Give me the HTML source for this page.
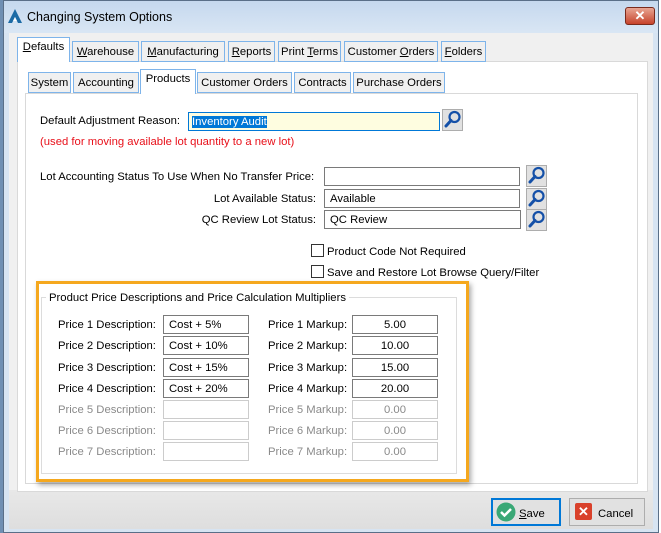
<!DOCTYPE html>
<html><head><style>
*{box-sizing:border-box;margin:0;padding:0}
body{width:661px;height:533px;overflow:hidden;background:#fff;font-family:"Liberation Sans",sans-serif;font-size:11.3px;color:#000;position:relative}
.a{position:absolute}
.tab{position:absolute;border:1px solid #7eb4ea;background:#f0f0f0;height:21px;line-height:20px;text-align:center;font-size:11.3px;white-space:nowrap;overflow:hidden}
.tab.sel{background:#fff;border-color:#7eb4ea;border-bottom:none;height:25px;line-height:19px}
.in{position:absolute;border:1px solid #7a7a7a;background:#fff;height:19px;line-height:18px;padding-left:5px;font-size:11.3px;white-space:nowrap}
.dis{border-color:#ccc;color:#8a8a8a}
.btn{position:absolute;width:21px;height:22px;background:#e1e1e1;border:1px solid #adadad}
.lbl{position:absolute;font-size:11.3px;line-height:14px;white-space:nowrap}
.g{color:#8a8a8a}
.cb{position:absolute;width:13px;height:13px;border:1px solid #333;background:#fff}
u{text-decoration:underline}
</style></head><body>
<div class="a" style="left:0;top:0;width:4px;height:533px;background:#6f8fb3"></div>
<div class="a" style="left:3px;top:0;width:656px;height:533px;background:#d7e4f2;border:1px solid #5a6f88"></div>
<div class="a" style="left:4px;top:1px;width:654px;height:32px;background:linear-gradient(#c5d8ee,#d9e6f4)"></div>
<svg class="a" style="left:7px;top:8px" width="16" height="16" viewBox="0 0 16 16"><path d="M8 1L1 15h4l3-6 3 6h4z" fill="#1b6aa5"/><path d="M8 9l-2 4h4z" fill="#fff"/></svg>
<div class="lbl" style="left:27px;top:10px;font-size:12.5px">Changing System Options</div>
<div class="a" style="left:625px;top:7px;width:30px;height:18px;background:linear-gradient(#e8a593,#c7432b);border:1px solid #7a2a1c;border-radius:3px;color:#fff;text-align:center;font-weight:bold;line-height:15px;font-size:13px">✕</div>
<div class="a" style="left:9px;top:33px;width:644px;height:496px;background:#f0f0f0"></div>
<div class="a" style="left:9px;top:490px;width:644px;height:39px;background:linear-gradient(#e8e8e8,#dedede)"></div>
<div class="a" style="left:17px;top:61px;width:631px;height:431px;background:#fff;border:1px solid #d9d9d9"></div>
<div class="tab sel" style="left:17px;top:37px;width:53px"><u>D</u>efaults</div>
<div class="tab" style="left:72px;top:41px;width:67px"><u>W</u>arehouse</div>
<div class="tab" style="left:141px;top:41px;width:84px"><u>M</u>anufacturing</div>
<div class="tab" style="left:228px;top:41px;width:47px"><u>R</u>eports</div>
<div class="tab" style="left:278px;top:41px;width:63px">Print <u>T</u>erms</div>
<div class="tab" style="left:344px;top:41px;width:94px">Customer <u>O</u>rders</div>
<div class="tab" style="left:441px;top:41px;width:45px"><u>F</u>olders</div>
<div class="a" style="left:25px;top:93px;width:613px;height:391px;background:#fff;border:1px solid #d9d9d9"></div>
<div class="tab" style="left:28px;top:72px;width:43px">System</div>
<div class="tab" style="left:73px;top:72px;width:66px">Accounting</div>
<div class="tab sel" style="left:140px;top:69px;width:56px">Products</div>
<div class="tab" style="left:197px;top:72px;width:95px">Customer Orders</div>
<div class="tab" style="left:294px;top:72px;width:57px">Contracts</div>
<div class="tab" style="left:353px;top:72px;width:92px">Purchase Orders</div>

<div class="lbl" style="left:40px;top:114px">Default Adjustment Reason:</div>
<div class="in" style="left:188px;top:112px;width:252px;background:#fefde0;border-color:#0078d7;padding-left:3px"><span style="background:#0078d7;color:#fff">Inventory Audit</span></div>
<div class="btn" style="left:442px;top:109px"></div>
<div class="lbl" style="left:40px;top:135px;color:#e8101a">(used for moving available lot quantity to a new lot)</div>

<div class="lbl" style="left:40px;top:170px">Lot Accounting Status To Use When No Transfer Price:</div>
<div class="in" style="left:324px;top:167px;width:196px"></div>
<div class="lbl" style="left:40px;top:192px;width:276px;text-align:right">Lot Available Status:</div>
<div class="in" style="left:324px;top:189px;width:196px">Available</div>
<div class="lbl" style="left:40px;top:213px;width:276px;text-align:right">QC Review Lot Status:</div>
<div class="in" style="left:324px;top:210px;width:197px">QC Review</div>
<div class="btn" style="left:526px;top:165px"></div>
<div class="btn" style="left:526px;top:188px"></div>
<div class="btn" style="left:526px;top:209px"></div>

<div class="cb" style="left:311px;top:244px"></div>
<div class="lbl" style="left:327px;top:245px">Product Code Not Required</div>
<div class="cb" style="left:311px;top:265px"></div>
<div class="lbl" style="left:327px;top:266px">Save and Restore Lot Browse Query/Filter</div>

<div class="a" style="left:36px;top:281px;width:433px;height:201px;border:3px solid #f5a81e;box-shadow:2px 3px 5px rgba(0,0,0,.35);background:#fff"></div>
<div class="a" style="left:41px;top:297px;width:416px;height:177px;border:1px solid #dcdcdc"></div>
<div class="lbl" style="left:46px;top:291px;background:#fff;padding:0 3px">Product Price Descriptions and Price Calculation Multipliers</div>

<div class="lbl" style="left:58px;top:318px">Price 1 Description:</div><div class="in" style="left:163px;top:315px;width:86px">Cost + 5%</div>
<div class="lbl" style="left:268px;top:318px">Price 1 Markup:</div><div class="in" style="left:352px;top:315px;width:86px;text-align:center;padding:0">5.00</div>
<div class="lbl" style="left:58px;top:339px">Price 2 Description:</div><div class="in" style="left:163px;top:336px;width:86px">Cost + 10%</div>
<div class="lbl" style="left:268px;top:339px">Price 2 Markup:</div><div class="in" style="left:352px;top:336px;width:86px;text-align:center;padding:0">10.00</div>
<div class="lbl" style="left:58px;top:361px">Price 3 Description:</div><div class="in" style="left:163px;top:358px;width:86px">Cost + 15%</div>
<div class="lbl" style="left:268px;top:361px">Price 3 Markup:</div><div class="in" style="left:352px;top:358px;width:86px;text-align:center;padding:0">15.00</div>
<div class="lbl" style="left:58px;top:382px">Price 4 Description:</div><div class="in" style="left:163px;top:379px;width:86px">Cost + 20%</div>
<div class="lbl" style="left:268px;top:382px">Price 4 Markup:</div><div class="in" style="left:352px;top:379px;width:86px;text-align:center;padding:0">20.00</div>
<div class="lbl g" style="left:58px;top:403px">Price 5 Description:</div><div class="in dis" style="left:163px;top:400px;width:86px"></div>
<div class="lbl g" style="left:268px;top:403px">Price 5 Markup:</div><div class="in dis" style="left:352px;top:400px;width:86px;text-align:center;padding:0">0.00</div>
<div class="lbl g" style="left:58px;top:424px">Price 6 Description:</div><div class="in dis" style="left:163px;top:421px;width:86px"></div>
<div class="lbl g" style="left:268px;top:424px">Price 6 Markup:</div><div class="in dis" style="left:352px;top:421px;width:86px;text-align:center;padding:0">0.00</div>
<div class="lbl g" style="left:58px;top:445px">Price 7 Description:</div><div class="in dis" style="left:163px;top:442px;width:86px"></div>
<div class="lbl g" style="left:268px;top:445px">Price 7 Markup:</div><div class="in dis" style="left:352px;top:442px;width:86px;text-align:center;padding:0">0.00</div>

<div class="a" style="left:491px;top:498px;width:70px;height:28px;background:#e1e1e1;border:2px solid #0078d7"></div>
<svg class="a" style="left:496px;top:502px" width="20" height="20"><circle cx="10" cy="10" r="9.5" fill="#3aa876"/><path d="M5 10l3.5 3.5L15 7" stroke="#fff" stroke-width="2.5" fill="none"/></svg>
<div class="lbl" style="left:519px;top:507px"><u>S</u>ave</div>
<div class="a" style="left:569px;top:498px;width:76px;height:28px;background:#e1e1e1;border:1px solid #adadad"></div>
<div class="a" style="left:575px;top:503px;width:17px;height:17px;background:#d9412b;border-radius:2px;color:#fff;font-weight:bold;text-align:center;line-height:17px;font-size:13px">✕</div>
<div class="lbl" style="left:598px;top:507px">Cancel</div>
<svg width="0" height="0" style="position:absolute"><defs><g id="m"><circle cx="12.5" cy="8" r="5" stroke="#1450a8" stroke-width="2.2" fill="none"/><path d="M9 11.5L4 17" stroke="#1450a8" stroke-width="3" stroke-linecap="round"/></g></defs></svg>
<svg class="a" style="left:442px;top:109px" width="21" height="22"><use href="#m"/></svg>
<svg class="a" style="left:526px;top:165px" width="21" height="22"><use href="#m"/></svg>
<svg class="a" style="left:526px;top:188px" width="21" height="22"><use href="#m"/></svg>
<svg class="a" style="left:526px;top:209px" width="21" height="22"><use href="#m"/></svg>
</body></html>
